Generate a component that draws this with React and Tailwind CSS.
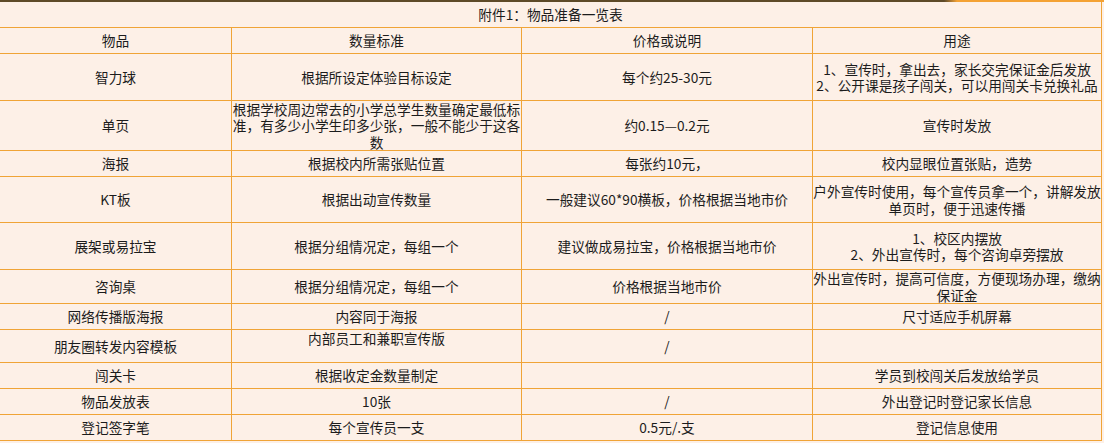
import React from 'react'

const rows = [
  { h: 'h-[26px]', cells: ['物品', '数量标准', '价格或说明', '用途'] },
  { h: 'h-[47px]', cells: ['智力球', '根据所设定体验目标设定', '每个约25-30元', ['1、宣传时，拿出去，家长交完保证金后发放', '2、公开课是孩子闯关，可以用闯关卡兑换礼品']] },
  { h: 'h-[50px]', cells: ['单页', ['根据学校周边常去的小学总学生数量确定最低标', '准，有多少小学生印多少张，一般不能少于这各', '数'], '约0.15—0.2元', '宣传时发放'] },
  { h: 'h-[26px]', cells: ['海报', '根据校内所需张贴位置', '每张约10元，', '校内显眼位置张贴，造势'] },
  { h: 'h-[46px]', cells: ['KT板', '根据出动宣传数量', '一般建议60*90横板，价格根据当地市价', ['户外宣传时使用，每个宣传员拿一个，讲解发放', '单页时，便于迅速传播']] },
  { h: 'h-[47px]', cells: ['展架或易拉宝', '根据分组情况定，每组一个', '建议做成易拉宝，价格根据当地市价', ['1、校区内摆放', '2、外出宣传时，每个咨询卓旁摆放']] },
  { h: 'h-[34px]', cells: ['咨询桌', '根据分组情况定，每组一个', '价格根据当地市价', ['外出宣传时，提高可信度，方便现场办理，缴纳', '保证金']] },
  { h: 'h-[26px]', cells: ['网络传播版海报', '内容同于海报', '/', '尺寸适应手机屏幕'] },
  { h: 'h-[33px]', cells: ['朋友圈转发内容模板', { top: '内部员工和兼职宣传版' }, '/', ''] },
  { h: 'h-[26px]', cells: ['闯关卡', '根据收定金数量制定', '', '学员到校闯关后发放给学员'] },
  { h: 'h-[26px]', cells: ['物品发放表', '10张', '/', '外出登记时登记家长信息'] },
  { h: 'h-[26px]', cells: ['登记签字笔', '每个宣传员一支', '0.5元/.支', '登记信息使用'] },
]

const widths = ['w-[232px]', 'w-[290px]', 'w-[291px]', 'w-[289px]']

const Cell = ({ value, width }) => {
  // top aligned cell (text followed by an empty line in the sheet)
  if (value && typeof value === 'object' && !Array.isArray(value)) {
    return (
      <div className={`${width} h-full shrink-0 border-r border-[#f0a437] flex items-start justify-center text-center whitespace-nowrap`}>
        {value.top}
      </div>
    )
  }
  const lines = Array.isArray(value) ? value : [value]
  return (
    <div className={`${width} h-full shrink-0 border-r border-[#f0a437] flex flex-col items-center justify-center text-center whitespace-nowrap`}>
      {lines.map((l, i) => (
        <span key={i}>{l}</span>
      ))}
    </div>
  )
}

export default function App() {
  return (
    <div
      className="w-[1104px] h-[443px] overflow-hidden bg-[#fdf0e7] text-[#1c1c1c] text-[13.7px] leading-[16.5px]"
      style={{ fontFamily: '"Microsoft YaHei", "Noto Sans CJK SC", "Noto Sans", sans-serif' }}
    >
      {/* top bar */}
      <div className="flex h-[2px] w-[1104px]">
        <div className="w-[944px] bg-[#5e4a28]" />
        <div className="w-[13px] bg-gradient-to-r from-[#5e4a28] to-[#f4a234]" />
        <div className="flex-1 bg-[#f4a234]" />
      </div>

      <div className="w-[1102px]">
        {/* title */}
        <div className="h-[26px] border-b border-r border-[#f0a437] flex items-center justify-center pb-[1px]">
          附件1：物品准备一览表
        </div>

        {rows.map((r, i) => (
          <div key={i} className={`${r.h} flex border-b border-[#f0a437]`}>
            {r.cells.map((c, j) => (
              <Cell key={j} value={c} width={widths[j]} />
            ))}
          </div>
        ))}
      </div>
    </div>
  )
}
